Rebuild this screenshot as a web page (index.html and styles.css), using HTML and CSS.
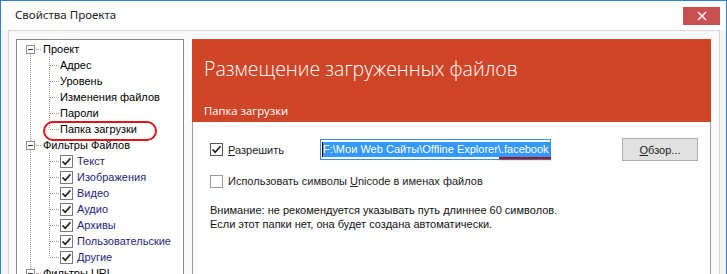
FILE: index.html
```html
<!DOCTYPE html>
<html lang="ru">
<head>
  <meta charset="UTF-8">
  <title>Свойства Проекта</title>
  <link rel="stylesheet" href="styles.css">
</head>
<body>

  <div class="window">

    <!-- Title bar -->
    <div class="titlebar">
      <span class="title">Свойства Проекта</span>
      <span class="close">
        <svg width="10" height="10" viewBox="0 0 10 10"><path d="M1 1 L9 9 M9 1 L1 9" stroke="#fff" stroke-width="1.4"/></svg>
      </span>
    </div>

    <div class="frame">

      <!-- Tree -->
      <div class="tree">
        <div class="tree-list">
          <div class="row top"><span class="toggle"></span><span class="hline"></span><span>Проект</span></div>
          <div class="group">
            <div class="row"><span class="hline"></span><span>Адрес</span></div>
            <div class="row"><span class="hline"></span><span>Уровень</span></div>
            <div class="row"><span class="hline"></span><span>Изменения файлов</span></div>
            <div class="row"><span class="hline"></span><span>Пароли</span></div>
            <div class="row marked"><span class="hline"></span><span>Папка загрузки</span><span class="ring"></span></div>
          </div>
          <div class="row top"><span class="toggle"></span><span class="hline"></span><span>Фильтры Файлов</span></div>
          <div class="group">
            <div class="row"><span class="hline"></span><span class="check on"></span><span class="filter">Текст</span></div>
            <div class="row"><span class="hline"></span><span class="check on"></span><span class="filter">Изображения</span></div>
            <div class="row"><span class="hline"></span><span class="check on"></span><span class="filter">Видео</span></div>
            <div class="row"><span class="hline"></span><span class="check on"></span><span class="filter">Аудио</span></div>
            <div class="row"><span class="hline"></span><span class="check on"></span><span class="filter">Архивы</span></div>
            <div class="row"><span class="hline"></span><span class="check on"></span><span class="filter">Пользовательские</span></div>
            <div class="row"><span class="hline"></span><span class="check on"></span><span class="filter">Другие</span></div>
          </div>
          <div class="row top"><span class="toggle"></span><span class="hline"></span><span>Фильтры URL</span></div>
        </div>
      </div>

      <!-- Settings page -->
      <div class="panel">
        <div class="banner">
          <h1>Размещение загруженных файлов</h1>
          <h2>Папка загрузки</h2>
        </div>
        <div class="page">
          <div class="path-row">
            <label class="opt enable"><span class="check on"></span><span><u>Р</u>азрешить</span></label>
            <div class="field">
              <span class="caret"></span><span class="sel">F:\Мои Web Сайты\Offline Explorer\.facebook</span>
              <span class="underline-mark"></span>
            </div>
            <button class="browse"><u>О</u>бзор...</button>
          </div>
          <label class="opt unicode"><span class="check"></span><span>Использовать символы <u>U</u>nicode в именах файлов</span></label>
          <p class="note">Внимание: не рекомендуется указывать путь длиннее 60 символов.<br>Если этот папки нет, она будет создана автоматически.</p>
        </div>
      </div>

    </div>
  </div>

</body>
</html>
```

FILE: styles.css
```css
* {
  margin: 0;
  padding: 0;
  box-sizing: border-box;
}

body {
  width: 727px;
  height: 274px;
  overflow: hidden;
  background: #fff;
  font-family: 'Liberation Sans', Arial, sans-serif;
  font-size: 11px;
  color: #000;
}

.window {
  width: 727px;
  height: 274px;
  border: 1px solid #2f7fc9;
  border-bottom: none;
  background: #f4f4f4;
}

.titlebar {
  height: 29px;
  background: #fff;
  display: flex;
  justify-content: space-between;
  align-items: flex-start;
}

.title {
  font-family: 'Noto Sans', sans-serif;
  font-size: 11.5px;
  color: #222;
  padding: 6px 0 0 14px;
}

.close {
  width: 37px;
  height: 18px;
  margin: 6px 6px 0 0;
  background: #c75050;
  display: flex;
  align-items: center;
  justify-content: center;
}

.frame {
  margin-left: 7px;
  width: 712px;
  height: 244px;
  border: 1px solid #d6d6d6;
  border-bottom: none;
  background: #fafafa;
  padding: 8px 8px 0 7px;
  display: flex;
  gap: 8px;
}

/* tree */
.tree {
  width: 168px;
  height: 240px;
  border: 1px solid #828790;
  border-bottom: none;
  background: #fff;
  padding-top: 1px;
}

.tree-list {
  background-image: repeating-linear-gradient(to bottom, #a0a0a0 0 1px, transparent 1px 2px);
  background-size: 1px 100%;
  background-position: 13px 13px;
  background-repeat: no-repeat;
}

.row {
  height: 16px;
  display: flex;
  align-items: center;
  padding-left: 33px;
  position: relative;
  white-space: nowrap;
}

.row .hline {
  width: 9px;
  height: 1px;
  margin-right: 1px;
  background: repeating-linear-gradient(to right, #a0a0a0 0 1px, transparent 1px 2px);
}

.row.top {
  padding-left: 9px;
}

.row.top .hline {
  width: 6px;
  margin-left: 1px;
  margin-right: 1px;
}

.toggle {
  width: 9px;
  height: 9px;
  border: 1px solid #919191;
  background: #fff;
  position: relative;
}

.toggle::after {
  content: "";
  position: absolute;
  left: 1px;
  top: 3px;
  width: 5px;
  height: 1px;
  background: #333;
}

.group {
  background-image: repeating-linear-gradient(to bottom, #a0a0a0 0 1px, transparent 1px 2px);
  background-size: 1px calc(100% - 8px);
  background-position: 32px 0;
  background-repeat: no-repeat;
}

.filter {
  color: #1f1f78;
}

.ring {
  position: absolute;
  left: 26px;
  top: 0;
  width: 114px;
  height: 20px;
  border: 2px solid #e0141e;
  border-radius: 10px;
}

/* checkboxes */
.check {
  width: 13px;
  height: 13px;
  border: 1px solid #7a7a7a;
  background: #fff;
  margin-right: 4px;
  flex-shrink: 0;
}

.check.on {
  background: #fff url("data:image/svg+xml,%3Csvg xmlns='http://www.w3.org/2000/svg' width='11' height='11'%3E%3Cpath d='M1.5 5.5 L4.2 8.2 L9.5 2.2' fill='none' stroke='%23222' stroke-width='1.7'/%3E%3C/svg%3E") no-repeat center;
}

/* page */
.panel {
  width: 519px;
  display: flex;
  flex-direction: column;
}

.banner {
  height: 83px;
  background: #cf4527;
  color: #fff;
  padding: 17px 12px 0;
}

.banner h1 {
  font-family: 'Open Sans', sans-serif;
  font-weight: 300;
  font-size: 19.5px;
  line-height: 26px;
}

.banner h2 {
  font-family: 'Open Sans', sans-serif;
  font-weight: 400;
  font-size: 11.3px;
  line-height: 14px;
  margin-top: 22px;
}

.page {
  flex: 1;
  background: #fff;
  border-left: 1px solid #9c9c9c;
  border-right: 1px solid #9c9c9c;
  padding: 16px 0 0 17px;
}

.path-row {
  display: flex;
  align-items: center;
  height: 23px;
}

.opt {
  display: flex;
  align-items: center;
  height: 16px;
  color: #222;
}

.opt .check {
  margin-right: 5px;
  border-color: #555;
}

.enable {
  width: 110px;
}

.field {
  width: 231px;
  height: 21px;
  border: 1px solid #3d8ee0;
  background: #fff;
  display: flex;
  align-items: center;
  padding-left: 1px;
  position: relative;
}

.caret {
  width: 1px;
  height: 15px;
  background: #000;
}

.sel {
  background: #3399ff;
  color: #fff;
  line-height: 15px;
  padding-right: 1px;
  white-space: nowrap;
}

.underline-mark {
  position: absolute;
  left: 178px;
  top: 17px;
  width: 52px;
  height: 2px;
  background: #a3161c;
  box-shadow: 0 1px 2px rgba(120, 0, 0, 0.4);
}

.browse {
  margin-left: 71px;
  width: 76px;
  height: 23px;
  border: 1px solid #adadad;
  background: #e1e1e1;
  font-family: 'Liberation Sans', Arial, sans-serif;
  font-size: 11px;
  color: #222;
}

.unicode {
  margin-top: 12px;
}

.unicode .check {
  border-color: #9a9a9a;
}

.note {
  margin-top: 14px;
  line-height: 14px;
  color: #111;
}
```
